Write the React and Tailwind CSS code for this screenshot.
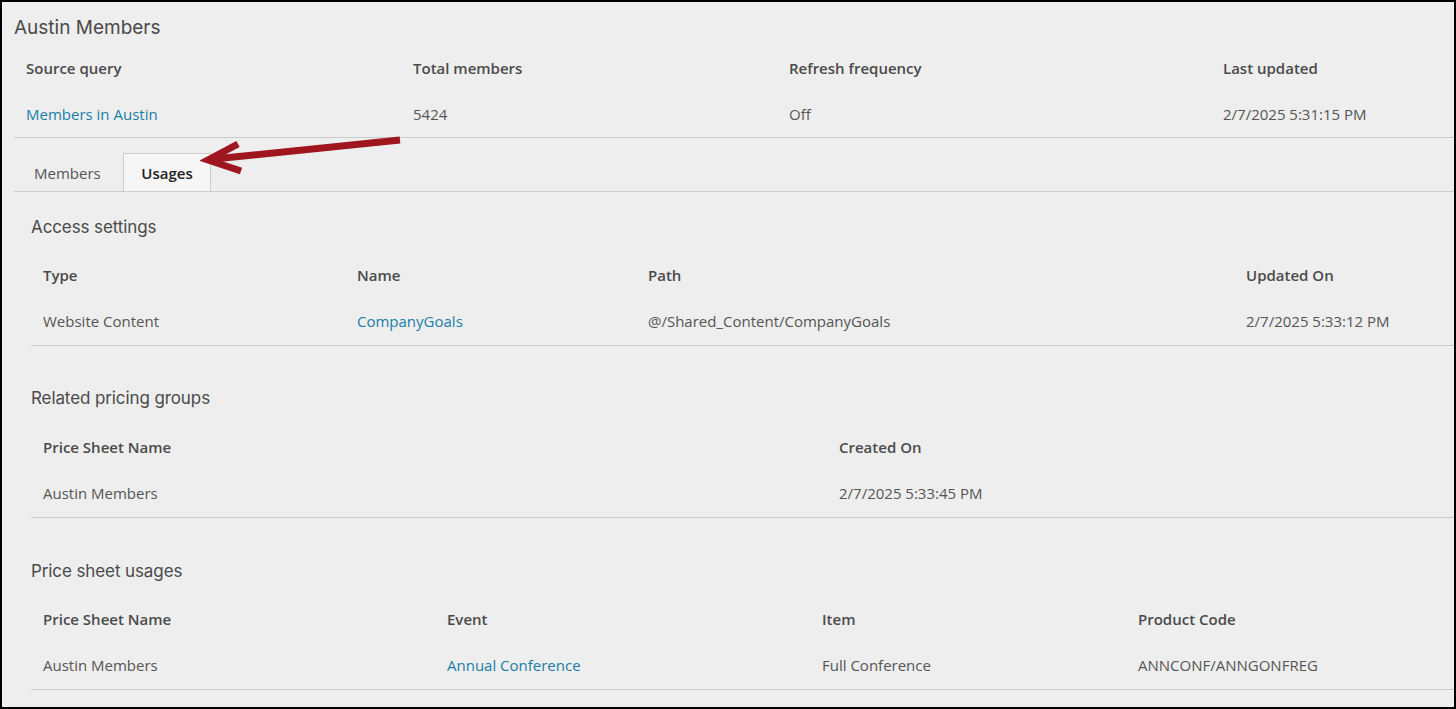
import React from 'react';

const body = { fontFamily: '"Open Sans", "Liberation Sans", sans-serif' };
const head = { fontFamily: 'Inter, "Open Sans", sans-serif' };

function Section({ title, cols, headers, row, top, gap }) {
  return (
    <section className={top}>
      <h2 style={head} className="h-[36px] flex items-center text-[17px] text-[#4a4a4a] px-[17px] tracking-[-0.1px]">
        {title}
      </h2>
      <div className={`ml-[17px] ${gap}`}>
        <div className={`grid ${cols} h-[46px] items-center`}>
          {headers.map((h) => (
            <div key={h} className="px-3 font-semibold text-[#4a4a4a]">{h}</div>
          ))}
        </div>
        <div className={`grid ${cols} h-[48px] items-center border-b border-[#cccccc]`}>
          {row.map((c, i) => (
            <div key={i} className={`px-3 ${c.link ? 'text-[#1a7ea6]' : 'text-[#555555]'}`}>{c.text}</div>
          ))}
        </div>
      </div>
    </section>
  );
}

export default function App() {
  return (
    <div style={body} className="relative w-[1456px] h-[709px] bg-[#eeeeee] border-2 border-black text-[15px] overflow-hidden">
      <h1 style={head} className="h-[48px] flex items-center pt-1 px-3 text-[19px] text-[#4a4a4a]">Austin Members</h1>

      <div className="ml-3 grid grid-cols-[387px_376px_434px_1fr] h-[36px] items-center">
        <div className="px-3 font-semibold text-[#4a4a4a]">Source query</div>
        <div className="px-3 font-semibold text-[#4a4a4a]">Total members</div>
        <div className="px-3 font-semibold text-[#4a4a4a]">Refresh frequency</div>
        <div className="px-3 font-semibold text-[#4a4a4a]">Last updated</div>
      </div>
      <div className="ml-3 grid grid-cols-[387px_376px_434px_1fr] h-[52px] pt-[6px] items-center border-b border-[#cccccc]">
        <div className="px-3 text-[#1a7ea6]">Members in Austin</div>
        <div className="px-3 text-[#555555]">5424</div>
        <div className="px-3 text-[#555555]">Off</div>
        <div className="px-3 text-[#555555]">2/7/2025 5:31:15 PM</div>
      </div>

      <div className="ml-3 mt-[15px] flex items-end border-b border-[#cccccc] h-[39px]">
        <div className="w-[109px] h-[38px] flex items-center pt-[2px] pl-5 text-[#555555]">Members</div>
        <div className="w-[88px] h-[38px] flex items-center justify-center pt-[2px] bg-[#f6f6f6] border-t border-l border-r border-[#cccccc] font-semibold text-[#222222]">Usages</div>
      </div>

      <div className="ml-3">
        <Section
          top="pt-[18px]"
          gap="mt-[6px]"
          title="Access settings"
          cols="grid-cols-[314px_291px_598px_1fr]"
          headers={['Type', 'Name', 'Path', 'Updated On']}
          row={[
            { text: 'Website Content' },
            { text: 'CompanyGoals', link: true },
            { text: '@/Shared_Content/CompanyGoals' },
            { text: '2/7/2025 5:33:12 PM' },
          ]}
        />
        <Section
          top="pt-[35px]"
          gap="mt-[7px]"
          title="Related pricing groups"
          cols="grid-cols-[796px_1fr]"
          headers={['Price Sheet Name', 'Created On']}
          row={[{ text: 'Austin Members' }, { text: '2/7/2025 5:33:45 PM' }]}
        />
        <Section
          top="pt-[36px]"
          gap="mt-[6px]"
          title="Price sheet usages"
          cols="grid-cols-[404px_375px_316px_1fr]"
          headers={['Price Sheet Name', 'Event', 'Item', 'Product Code']}
          row={[
            { text: 'Austin Members' },
            { text: 'Annual Conference', link: true },
            { text: 'Full Conference' },
            { text: 'ANNCONF/ANNGONFREG' },
          ]}
        />
      </div>

      <svg className="absolute left-[198px] top-[126px] pointer-events-none" width="210" height="50" viewBox="0 0 210 50">
        <line x1="200" y1="12" x2="14" y2="31" stroke="#a0161f" strokeWidth="7" />
        <polyline points="38,16 8,32 41,43" fill="none" stroke="#a0161f" strokeWidth="7" strokeLinejoin="miter" />
      </svg>
    </div>
  );
}
